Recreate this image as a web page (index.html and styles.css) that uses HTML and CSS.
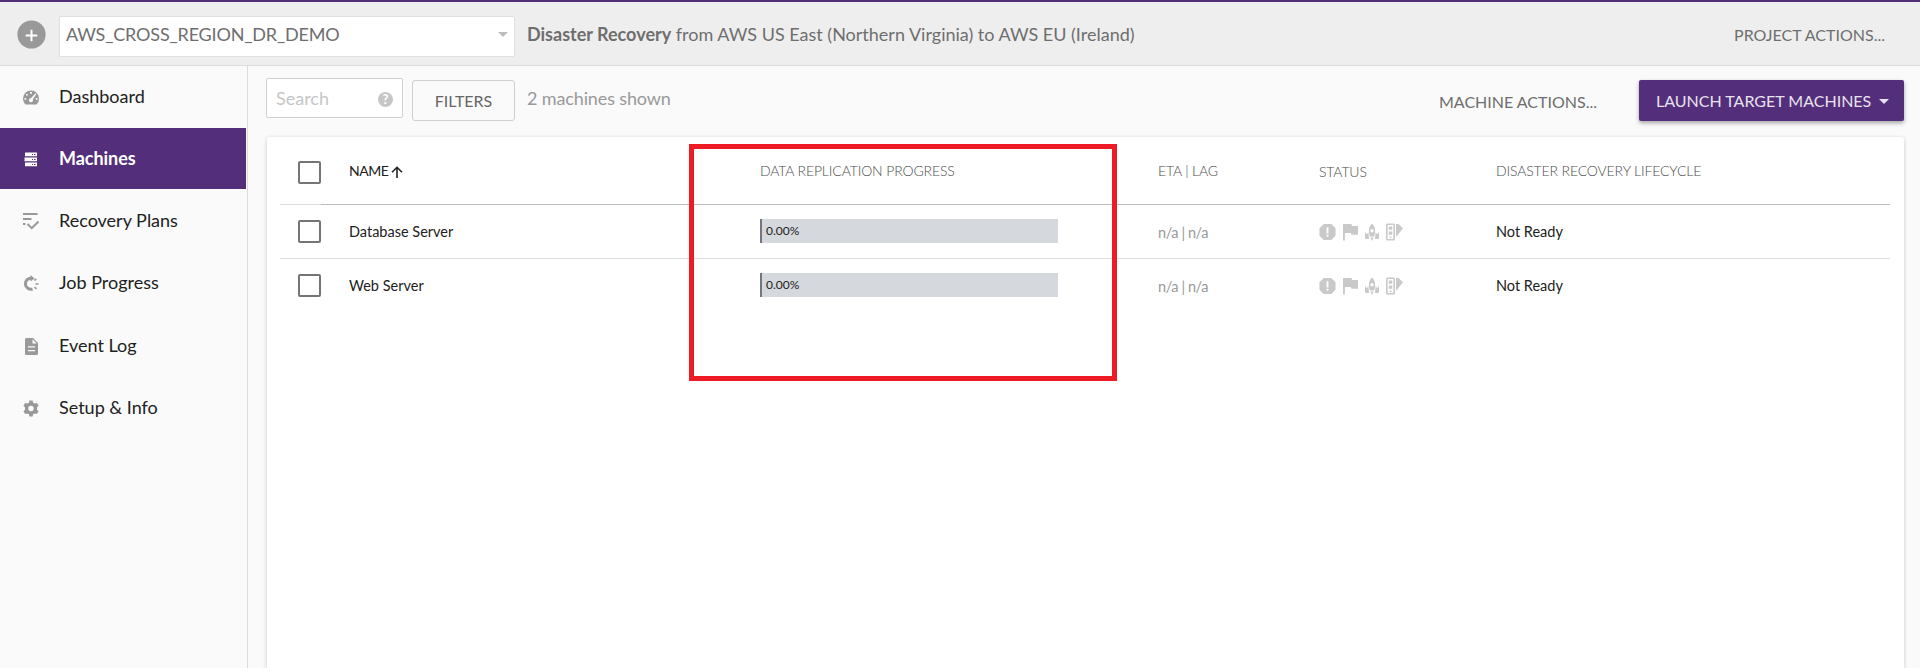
FILE: index.html
```
<!DOCTYPE html>
<html lang="en">
<head>
<meta charset="utf-8">
<title>Machines</title>
<link rel="stylesheet" href="styles.css">
</head>
<body>
<svg class="sprite" aria-hidden="true">
  <symbol id="alert" viewBox="0 0 18 18"><path fill-rule="evenodd" d="M5 0.500h8L17.500 5v8L13 17.500H5L0.500 13V5zM8 4v6.500h2V4zM8 12v2h2v-2z"/></symbol>
  <symbol id="flag" viewBox="0 0 16 18"><path d="M0 0.500h9l.7 2H16v9.500H9l-.7-2H2v8H0z"/></symbol>
  <symbol id="rocket" viewBox="0 0 14 18"><path fill-rule="evenodd" d="M7 0.500C4.500 2.600 3.600 5.500 3.900 9L4.700 13.500h4.600L10.100 9C10.400 5.500 9.500 2.600 7 .5zM7 6a1.700 1.700 0 1 1 0 3.400A1.700 1.700 0 0 1 7 6zM5.300 14.500h3.400L7 18zM3.400 9.500L.5 12v4h3.500zM10.600 9.500l2.900 2.500v4h-3.500z"/><path d="M0 9.500h1.200v6H0zM12.800 9.500H14v6h-1.200z"/></symbol>
  <symbol id="swatch" viewBox="0 0 17 18"><path fill-rule="evenodd" d="M1.500.5h6Q9 .5 9 2v14q0 1.500-1.500 1.500h-6Q0 17.500 0 16V2Q0 .5 1.500.5zM1.600 2v14h5.800V2z"/><path d="M2.800 3.500h3.500v3.300H2.800zM2.800 8.500h3.500v3.300H2.800zM3.700 13.500h1.700v1.500H3.700zM10 1h2.500L17 5.300 10 14z"/></symbol>
</svg>

<header class="topbar">
  <button class="add" aria-label="Add project"><svg viewBox="0 0 30 30"><circle cx="15" cy="15" r="14.600" fill="#999"/><path d="M15 10v12M9 16h12" stroke="#fff" stroke-width="2"/></svg></button>
  <div class="project-select"><span>AWS_CROSS_REGION_DR_DEMO</span><i class="caret"></i></div>
  <p class="route"><b>Disaster Recovery</b> from AWS US East (Northern Virginia) to AWS EU (Ireland)</p>
  <a class="action project-action">PROJECT ACTIONS...</a>
</header>

<div class="body">
  <nav class="sidebar">
    <a class="item first"><svg viewBox="0 0 16 16"><path fill-rule="evenodd" d="M8 1a8 8 0 0 0-8 8c0 2.300 1 4.400 2.500 6h11A8 8 0 0 0 16 9a8 8 0 0 0-8-8zM7 2.600h2v1.600H7zM3 4.400h1.800V6H3zM1.500 8.500h1.700v1.700H1.500zM12.800 8.500h1.700v1.700h-1.700zM12.600 3.800l.8.7L9.800 10a2 2 0 1 1-1.900-1.300z"/></svg><span>Dashboard</span></a>
    <a class="item active"><svg viewBox="0 0 16 16"><path fill-rule="evenodd" d="M2.500 1h11q.5 0 .5.5v3.300H2V1.500Q2 1 2.500 1zM9 2.500v1h1v-1zM11 2.500v1h1.500v-1zM1.500 6h12.500v3.800H1.500zM9 7.500v1h1v-1zM11 7.500v1h1.500v-1zM2 11h12v3.800H2zM9 12.500v1h1v-1zM11 12.500v1h1.500v-1z"/></svg><span>Machines</span></a>
    <a class="item"><svg viewBox="0 0 16 17"><path d="M0 0h14.500v2H0zM0 5h8.500v2H0zM0 10h2.500v2H0z"/><path d="M4.500 11l4.200 4.200L15.500 8.500" fill="none" stroke="#999" stroke-width="2"/></svg><span>Recovery Plans</span></a>
    <a class="item"><svg viewBox="0 0 16 17"><path d="M8.800 3.200a5.600 5.600 0 1 0 .8 10.900" fill="none" stroke="#999" stroke-width="3"/><path d="M7.500 0l4 3.500-4 3z"/><path d="M11.500 5.500l1.700-1.700M12.500 9h3M11.500 12.200l2 1.700" stroke="#999" stroke-width="1.700"/></svg><span>Job Progress</span></a>
    <a class="item"><svg viewBox="0 0 16 17"><path fill-rule="evenodd" d="M3.500 0H10l5 5v10.500q0 1.500-1.500 1.500h-10Q2 17 2 15.500v-14Q2 0 3.500 0zM9.500 1.300v4.200h4.200zM5 8.300v1.300h7V8.300zM5 12v1.300h7V12z"/></svg><span>Event Log</span></a>
    <a class="item"><svg viewBox="0 0 16 16"><path fill-rule="evenodd" d="M6.400 0h3.200l.5 2.200 1.500.9 2.200-.7L15.600 5.200 14 6.800v2.400l1.600 1.600-1.800 2.800-2.200-.7-1.500.9-.5 2.200H6.400l-.5-2.200-1.500-.9-2.200.7L.4 10.800 2 9.200V6.800L.4 5.200l1.800-2.800 2.200.7 1.500-.9zM8 5.300a2.700 2.700 0 1 0 0 5.400 2.700 2.700 0 0 0 0-5.400z"/></svg><span>Setup &amp; Info</span></a>
  </nav>

  <main class="content">
    <div class="toolbar">
      <div class="search"><span>Search</span><i class="help">?</i></div>
      <button class="filters">FILTERS</button>
      <p class="count">2 machines shown</p>
      <a class="action machine-action">MACHINE ACTIONS...</a>
      <button class="launch"><span>LAUNCH TARGET MACHINES</span><i class="caret"></i></button>
    </div>

    <section class="card">
      <div class="row head">
        <div class="check-cell"><i class="check"></i></div>
        <div class="sorted"><span>NAME</span><svg viewBox="0 0 12 12"><path d="M6 12V1.500M1 6.300L6 1.300l5 5" fill="none" stroke="#222" stroke-width="1.600"/></svg></div>
        <div class="h-progress">DATA REPLICATION PROGRESS</div>
        <div class="h-eta">ETA | LAG</div>
        <div class="h-status">STATUS</div>
        <div class="h-life">DISASTER RECOVERY LIFECYCLE</div>
      </div>
      <div class="row">
        <div class="check-cell"><i class="check"></i></div>
        <div class="name">Database Server</div>
        <div><div class="bar">0.00%</div></div>
        <div class="lag">n/a | n/a</div>
        <div class="icons"><svg class="w17"><use href="#alert"/></svg><svg class="w15"><use href="#flag"/></svg><svg class="w14"><use href="#rocket"/></svg><svg class="w17"><use href="#swatch"/></svg></div>
        <div class="ready">Not Ready</div>
      </div>
      <div class="row last">
        <div class="check-cell"><i class="check"></i></div>
        <div class="name">Web Server</div>
        <div><div class="bar">0.00%</div></div>
        <div class="lag">n/a | n/a</div>
        <div class="icons"><svg class="w17"><use href="#alert"/></svg><svg class="w15"><use href="#flag"/></svg><svg class="w14"><use href="#rocket"/></svg><svg class="w17"><use href="#swatch"/></svg></div>
        <div class="ready">Not Ready</div>
      </div>
      <div class="highlight"></div>
    </section>
  </main>
</div>
</body>
</html>
```

FILE: styles.css
```
* { box-sizing: border-box; }
html, body { height: 100%; }
body {
  margin: 0;
  height: 668px;
  overflow: hidden;
  display: flex;
  flex-direction: column;
  background: #fafafa;
  color: #212121;
  font-family: Lato, "Open Sans", sans-serif;
  font-size: 18px;
  white-space: nowrap;
}
p { margin: 0; }
button { font-family: inherit; padding: 0; margin: 0; border: 0; background: none; }
.sprite { display: none; }

.topbar {
  flex: none;
  height: 66px;
  display: flex;
  align-items: center;
  padding: 1px 35px 0 17px;
  border-top: 2px solid #532e7a;
  border-bottom: 1px solid #dcdcdc;
  background: #eee;
  color: #6e6e6e;
}
.add { width: 29px; height: 29px; }
.add svg { display: block; width: 29px; height: 29px; }
.project-select {
  width: 456px;
  height: 41px;
  margin: 4px 0 0 13px;
  padding: 0 6px 4px 6px;
  display: flex;
  align-items: center;
  justify-content: space-between;
  border: 1px solid #e0e0e0;
  border-radius: 2px;
  background: #fff;
  letter-spacing: -.18px;
}
.caret {
  border: 5px solid transparent;
  border-top-color: #bdbdbd;
  border-bottom: 0;
}
.route { margin: 0 0 0 12px; }
.action { margin-left: auto; font-size: 16px; color: #6e6e6e; }

.body { flex: 1; min-height: 0; display: flex; }
.sidebar {
  width: 248px;
  flex: none;
  padding-right: 1px;
  border-right: 1px solid #dcdcdc;
}
.item {
  height: 62.300px;
  display: flex;
  align-items: center;
  gap: 20px;
  padding: 0 0 1px 23px;
}
.item svg { width: 16px; height: 17px; fill: #999; margin-top: 3px; }
.item.first { padding-bottom: 2px; }
.item.active { height: 61px; background: #532e7a; color: #fff; font-weight: 700; letter-spacing: -.05px; }
.item.active svg { fill: #fff; margin-top: 2px; }

.content {
  flex: 1;
  min-width: 0;
  display: flex;
  flex-direction: column;
  padding: 12px 16px 0 18px;
}
.toolbar { height: 59px; flex: none; display: flex; align-items: flex-start; }
.search {
  width: 137px;
  height: 40px;
  padding: 0 9px 0 9px;
  display: flex;
  align-items: center;
  justify-content: space-between;
  border: 1px solid #d0d0d0;
  border-radius: 2px;
  background: #fff;
  color: #c6c6c6;
}
.help {
  width: 15px;
  height: 15px;
  margin-top: 3px;
  border-radius: 50%;
  background: #c6c6c6;
  color: #fff;
  font: 700 13px/15px Lato, sans-serif;
  text-align: center;
}
.filters {
  width: 103px;
  height: 41px;
  margin: 2px 0 0 9px;
  border: 1px solid #cfcfcf;
  border-radius: 3px;
  font-size: 16px;
  color: #666;
}
.count { margin: 9px 0 0 12px; color: #999; letter-spacing: -.13px; }
.machine-action { margin-top: 14px; }
.launch {
  width: 265px;
  height: 41px;
  margin: 2px 0 0 42px;
  padding: 0 15px 0 17px;
  display: flex;
  align-items: center;
  justify-content: space-between;
  border-radius: 2px;
  background: #532e7a;
  color: #e8e2ee;
  font-size: 16px;
  box-shadow: 0 2px 4px rgba(0, 0, 0, .35);
}
.launch .caret { border-top-color: #e8e2ee; margin-top: 1px; }

.card {
  position: relative;
  flex: 1;
  margin-left: 1px;
  padding: 0 14px 0 13px;
  border-radius: 3px 3px 0 0;
  background: #fff;
  box-shadow: 0 1px 4px rgba(0, 0, 0, .2);
}
.row {
  height: 54px;
  display: grid;
  grid-template-columns: 69px 411px 398px 161px 177px 1fr;
  align-items: center;
  padding-bottom: 1px;
  border-bottom: 1px solid #dedede;
  font-size: 14px;
}
.row.last { border-bottom-color: transparent; }
.head {
  height: 68px;
  padding-bottom: 2px;
  color: #4c4c4c;
  font-weight: 300;
  letter-spacing: -.14px;
  border-bottom: 0;
  background: linear-gradient(90deg, #dedede 41px, #bdbdbd 41px) left bottom / 100% 1px no-repeat;
}
.check-cell { padding: 1px 0 0 18px; }
.head .check-cell { padding-top: 4px; }
.check {
  display: block;
  width: 23px;
  height: 23px;
  border: 2px solid #757575;
  border-radius: 2px;
}
.sorted { display: flex; align-items: center; gap: 3px; color: #212121; font-weight: 400; letter-spacing: -.5px; }
.sorted svg { width: 12px; height: 12px; margin-top: 4px; }
.name, .ready { font-size: 14.500px; padding-top: 1px; }
.bar {
  width: 298px;
  height: 24px;
  padding-left: 4px;
  border-left: 2px solid #75757f;
  background: #d5d8dd;
  font-size: 12px;
  line-height: 24px;
}
.lag { color: #999; padding-top: 2px; font-size: 14.500px; letter-spacing: -.4px; }
.h-status { padding-top: 2px; }
.icons { display: flex; gap: 7px; padding-top: 2px; }
.icons svg { height: 18px; fill: #c9c9c9; }
.w17 { width: 17px; }
.w15 { width: 15px; }
.w14 { width: 14px; }
.highlight {
  position: absolute;
  left: 422px;
  top: 7px;
  width: 428px;
  height: 237px;
  border: 5px solid #ed1c24;
}
```
